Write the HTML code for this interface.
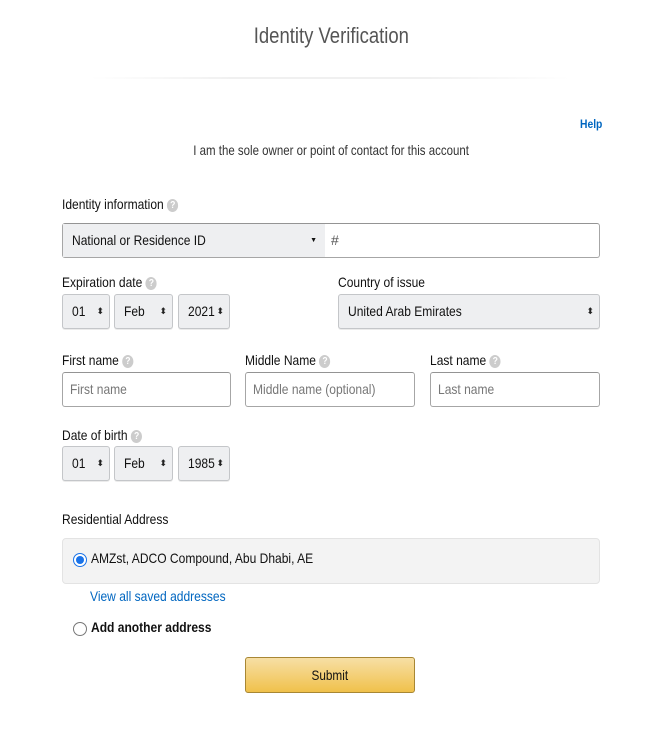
<!DOCTYPE html>
<html><head><meta charset="utf-8"><style>
*{box-sizing:border-box;margin:0;padding:0}
body{width:649px;height:741px;background:#fff;font-family:"Liberation Sans",sans-serif;color:#111;position:relative;overflow:hidden;font-size:14px}
.a{position:absolute;white-space:nowrap}
.n{display:inline-block;transform:scaleX(.86);transform-origin:left center;white-space:nowrap}
.c{display:inline-block;transform:scaleX(.84);transform-origin:center;white-space:nowrap}
.lbl{font-size:14px;color:#111}
.q{display:inline-block;width:13px;height:13px;border-radius:50%;background:#ccc;color:#fff;font-size:10px;text-align:center;line-height:13px;font-weight:bold;vertical-align:1px;margin-left:4px}
.sel{position:absolute;background:#eeeff1;border:1px solid #c4c6c9;border-radius:3px;box-shadow:0 1px 0 rgba(0,0,0,.08);font-size:14px;padding-left:9px;line-height:33px}
.sel .ar{position:absolute;right:5px;top:0;font-size:9px;color:#222;line-height:33px}
.inp{position:absolute;background:#fff;border:1px solid #a6a6a6;border-top-color:#949494;border-radius:3px;font-size:14px;color:#777;padding-left:7px;line-height:33px}
</style></head><body>
<div class="a" style="left:0;width:662px;text-align:center;top:23px;font-size:22px;color:#555"><span class="c">Identity Verification</span></div>
<div class="a" style="left:90px;width:480px;top:77px;height:2px;background:linear-gradient(90deg,rgba(0,0,0,0),#f0f0f0 30%,#f0f0f0 70%,rgba(0,0,0,0))"></div>
<div class="a" style="left:580px;top:117px;font-size:12px;color:#0066c0;font-weight:bold"><span class="n">Help</span></div>
<div class="a" style="left:0;width:662px;text-align:center;top:142px;font-size:14px;color:#333"><span class="c" style="transform:scaleX(.82)">I am the sole owner or point of contact for this account</span></div>

<div class="a lbl" style="left:62px;top:196px"><span class="n">Identity information<span class="q">?</span></span></div>
<div class="inp" style="left:62px;top:223px;width:538px;height:35px;color:#555;padding-left:0">
 <div style="position:absolute;left:0;top:0;width:262px;height:33px;background:#eeeff1;color:#111;padding-left:9px"><span class="n">National or Residence ID</span><span style="position:absolute;right:8px;font-size:7px">▼</span></div>
 <span style="position:absolute;left:268px">#</span></div>

<div class="a lbl" style="left:62px;top:274px"><span class="n">Expiration date<span class="q">?</span></span></div>
<div class="sel" style="left:62px;top:294px;width:48px;height:35px"><span class="n">01</span><span class="ar">⬍</span></div>
<div class="sel" style="left:114px;top:294px;width:59px;height:35px"><span class="n">Feb</span><span class="ar">⬍</span></div>
<div class="sel" style="left:178px;top:294px;width:52px;height:35px"><span class="n">2021</span><span class="ar">⬍</span></div>
<div class="a lbl" style="left:338px;top:274px"><span class="n">Country of issue</span></div>
<div class="sel" style="left:338px;top:294px;width:262px;height:35px"><span class="n">United Arab Emirates</span><span class="ar">⬍</span></div>

<div class="a lbl" style="left:62px;top:352px"><span class="n">First name<span class="q">?</span></span></div>
<div class="a lbl" style="left:245px;top:352px"><span class="n">Middle Name<span class="q">?</span></span></div>
<div class="a lbl" style="left:430px;top:352px"><span class="n">Last name<span class="q">?</span></span></div>
<div class="inp" style="left:62px;top:372px;width:169px;height:35px"><span class="n">First name</span></div>
<div class="inp" style="left:245px;top:372px;width:170px;height:35px"><span class="n">Middle name (optional)</span></div>
<div class="inp" style="left:430px;top:372px;width:170px;height:35px"><span class="n">Last name</span></div>

<div class="a lbl" style="left:62px;top:427px"><span class="n">Date of birth<span class="q">?</span></span></div>
<div class="sel" style="left:62px;top:446px;width:48px;height:35px"><span class="n">01</span><span class="ar">⬍</span></div>
<div class="sel" style="left:114px;top:446px;width:59px;height:35px"><span class="n">Feb</span><span class="ar">⬍</span></div>
<div class="sel" style="left:178px;top:446px;width:52px;height:35px"><span class="n">1985</span><span class="ar">⬍</span></div>

<div class="a lbl" style="left:62px;top:511px"><span class="n">Residential Address</span></div>
<div class="a" style="left:62px;top:538px;width:538px;height:46px;background:#f3f3f3;border:1px solid #e3e3e3;border-radius:4px"></div>
<div class="a" style="left:73px;top:553px;width:14px;height:14px;border-radius:50%;border:1px solid #1a73e8;background:#fff"><div style="margin:2px;width:8px;height:8px;border-radius:50%;background:#1a73e8"></div></div>
<div class="a" style="left:91px;top:550px;font-size:14px"><span class="n">AMZst, ADCO Compound, Abu Dhabi, AE</span></div>
<div class="a" style="left:90px;top:588px;font-size:14px;color:#0066c0"><span class="n">View all saved addresses</span></div>
<div class="a" style="left:73px;top:622px;width:14px;height:14px;border-radius:50%;border:1px solid #777;background:#fff"></div>
<div class="a" style="left:91px;top:619px;font-size:14px;font-weight:bold"><span class="n">Add another address</span></div>

<div class="a" style="left:245px;top:657px;width:170px;height:36px;border:1px solid #a88734;border-radius:3px;background:linear-gradient(#f7dfa5,#f0c14b);text-align:center;line-height:34px;font-size:14px"><span class="c">Submit</span></div>
</body></html>
